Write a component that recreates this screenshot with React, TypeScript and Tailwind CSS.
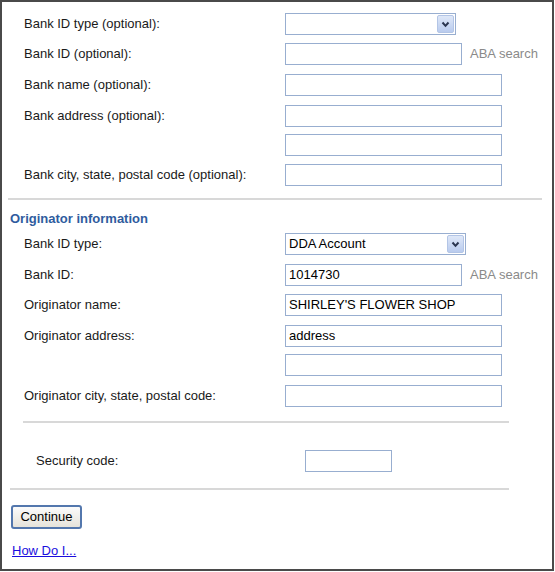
import React from "react";

const font = { fontFamily: '"Liberation Sans", Arial, sans-serif' };

function Field({ w, value }: { w: string; value?: string }) {
  return (
    <div
      className={`${w} h-[22px] border border-[#98aed0] bg-white flex items-center pl-[3px] text-[13px] text-black`}
    >
      {value}
    </div>
  );
}

function Select({ w, value }: { w: string; value?: string }) {
  return (
    <div className={`${w} h-[22px] border border-[#98aed0] bg-white flex items-center justify-between pl-[3px] pr-px text-[13px] text-black`}>
      <span>{value}</span>
      <span className="w-[17px] h-[18px] rounded-[2px] border border-[#b3c5e6] bg-gradient-to-b from-[#dfe8f8] to-[#b9cbee] flex items-center justify-center">
        <svg width="9" height="7" viewBox="0 0 9 7">
          <path d="M1.5 1.5 L4.5 4.8 L7.5 1.5" stroke="#2a3550" strokeWidth="2" fill="none" />
        </svg>
      </span>
    </div>
  );
}

function Row({ label, className = "", children }: { label?: string; className?: string; children: React.ReactNode }) {
  return (
    <div className={`flex items-center h-[22px] ${className}`}>
      <div className="w-[283px] pl-[22px] text-[13px] text-[#1a1a1a]">{label}</div>
      {children}
    </div>
  );
}

function Aba() {
  return <span className="ml-[8px] text-[13px] text-[#8a8a8a]">ABA search</span>;
}

export default function App() {
  return (
    <div style={font} className="w-[554px] h-[571px] border-2 border-[#4a4a4a] bg-white">
      {/* Bank section */}
      <div className="pt-[11px] flex flex-col">
        <Row label="Bank ID type (optional):">
          <Select w="w-[171px]" />
        </Row>
        <Row label="Bank ID (optional):" className="mt-[8px]">
          <Field w="w-[177px]" />
          <Aba />
        </Row>
        <Row label="Bank name (optional):" className="mt-[9px]">
          <Field w="w-[217px]" />
        </Row>
        <Row label="Bank address (optional):" className="mt-[9px]">
          <Field w="w-[217px]" />
        </Row>
        <Row className="mt-[7px]">
          <Field w="w-[217px]" />
        </Row>
        <Row label="Bank city, state, postal code (optional):" className="mt-[8px]">
          <Field w="w-[217px]" />
        </Row>
      </div>

      <div className="mt-[12px] ml-[6px] mr-[10px] h-[2px] bg-[#d8d8d8]" />

      {/* Originator section */}
      <div className="mt-[11px] pl-[8px] text-[13px] font-bold text-[#2f5c9e] leading-[15px]">
        Originator information
      </div>
      <div className="mt-[7px] flex flex-col">
        <Row label="Bank ID type:">
          <Select w="w-[181px]" value="DDA Account" />
        </Row>
        <Row label="Bank ID:" className="mt-[9px]">
          <Field w="w-[177px]" value="1014730" />
          <Aba />
        </Row>
        <Row label="Originator name:" className="mt-[8px]">
          <Field w="w-[217px]" value="SHIRLEY'S FLOWER SHOP" />
        </Row>
        <Row label="Originator address:" className="mt-[9px]">
          <Field w="w-[217px]" value="address" />
        </Row>
        <Row className="mt-[7px]">
          <Field w="w-[217px]" />
        </Row>
        <Row label="Originator city, state, postal code:" className="mt-[9px]">
          <Field w="w-[217px]" />
        </Row>
      </div>

      <div className="mt-[14px] ml-[21px] w-[486px] h-[2px] bg-[#d8d8d8]" />

      {/* Security */}
      <div className="mt-[27px] flex items-center h-[22px]">
        <div className="w-[303px] pl-[34px] text-[13px] text-[#1a1a1a]">Security code:</div>
        <Field w="w-[87px]" />
      </div>

      <div className="mt-[16px] ml-[8px] w-[499px] h-[2px] bg-[#d8d8d8]" />

      <button className="mt-[15px] ml-[9px] w-[71px] h-[24px] rounded-[3px] border-2 border-[#5377ad] bg-gradient-to-b from-[#fbfbfb] to-[#e6e3da] text-[13px] text-black flex items-center justify-center">
        Continue
      </button>

      <a href="#" className="block mt-[14px] ml-[10px] text-[13px] text-[#1a0dde] underline leading-[15px]">
        How Do I...
      </a>
    </div>
  );
}
